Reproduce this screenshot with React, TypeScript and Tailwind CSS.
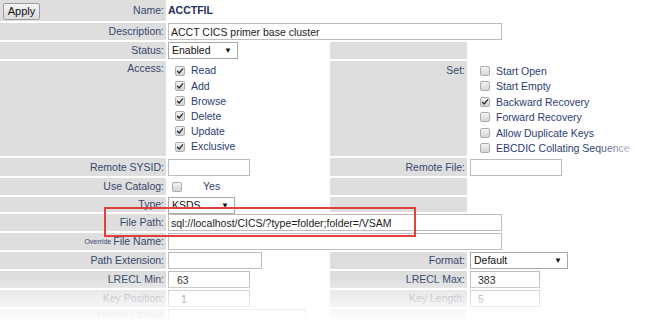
import React from "react";

const font = { fontFamily: '"Liberation Sans", Arial, sans-serif' };

const Check = ({ checked = false }: { checked?: boolean }) => (
    <span className="inline-flex items-center justify-center w-[10px] h-[10px] rounded-[2px] border border-[#acacac] bg-gradient-to-b from-[#f2f2f2] to-[#d6d6d6] shrink-0">
        {checked && (
            <svg width="8" height="8" viewBox="0 0 8 8">
                <path d="M1.5 4.3 L3.2 6 L6.6 1.8" fill="none" stroke="#2a2a2a" strokeWidth="1.3" strokeLinecap="round" strokeLinejoin="round" />
            </svg>
        )}
    </span>
);

const Label = ({ children, top = false, dim = false }: { children: React.ReactNode; top?: boolean; dim?: boolean }) => (
    <div
        className={`bg-[#dedede] flex justify-end pr-[2px] ${top ? "items-start pt-[2px]" : "items-center"} ${dim ? "text-[#8e95a2]" : "text-[#36476c]"}`}
    >
        {children}
    </div>
);

const Gray = () => <div className="bg-[#dedede]" />;
const Empty = () => <div />;

const TextBox = ({ w, value = "", pad = "pl-[2px]", color = "text-[#1c1c1c]" }: { w: string; value?: string; pad?: string; color?: string }) => (
    <input
        readOnly
        defaultValue={value}
        className={`${w} h-[17px] border border-[#bdbdbd] bg-white ${pad} ${color} text-[10.5px] outline-none`}
    />
);

const Select = ({ w, value }: { w: string; value: string }) => (
    <div className={`${w} h-[17px] border border-[#a9a9a9] bg-white flex items-center justify-between pl-[3px] pr-[5px] text-[#111]`}>
        <span>{value}</span>
        <span className="text-[8px] leading-none">▼</span>
    </div>
);

const access = [
    ["Read", true],
    ["Add", true],
    ["Browse", true],
    ["Delete", true],
    ["Update", true],
    ["Exclusive", true],
] as const;

const sets = [
    ["Start Open", false],
    ["Start Empty", false],
    ["Backward Recovery", true],
    ["Forward Recovery", false],
    ["Allow Duplicate Keys", false],
    ["EBCDIC Collating Sequence", false],
] as const;

export default function App() {
    return (
        <div className="relative w-[647px] h-[320px] overflow-hidden bg-white text-[10.5px] leading-none" style={font}>
            <div className="grid grid-cols-[166px_164px_137px_1fr] grid-rows-[21px_17px_17px_95px_18px_17px_15px_17px_17px_17px_17px_17px_11px] gap-y-[2px]">
                {/* Name */}
                <div className="bg-[#dedede] flex items-center justify-between pl-[3px] pr-[2px] text-[#36476c]">
                    <button className="w-[37px] h-[17px] mt-[1px] rounded-[2px] border border-[#9c9c9c] bg-gradient-to-b from-[#f4f4f4] to-[#dcdcdc] text-[11px] text-[#111]">
                        Apply
                    </button>
                    <span>Name:</span>
                </div>
                <div className="flex items-center pl-[2px] font-bold text-[#1d3160]">ACCTFIL</div>
                <Empty />
                <Empty />

                {/* Description */}
                <Label>Description:</Label>
                <div className="col-span-3 pl-[2px]">
                    <TextBox w="w-[334px]" value="ACCT CICS primer base cluster" />
                </div>

                {/* Status */}
                <Label>Status:</Label>
                <div className="pl-[2px]">
                    <Select w="w-[70px]" value="Enabled" />
                </div>
                <Gray />
                <Empty />

                {/* Access / Set */}
                <Label top>Access:</Label>
                <div className="pl-[9px] pt-[2px] flex flex-col text-[#2b3d72]">
                    {access.map(([name, on]) => (
                        <div key={name} className="h-[15.2px] flex items-center gap-[6px]">
                            <Check checked={on} />
                            <span>{name}</span>
                        </div>
                    ))}
                </div>
                <Label top>
                    <span className="pt-[2px]">Set:</span>
                </Label>
                <div className="pl-[13px] pt-[2px] flex flex-col text-[#2b3d72] whitespace-nowrap">
                    {sets.map(([name, on]) => (
                        <div key={name} className="h-[15.6px] flex items-center gap-[6px]">
                            <Check checked={on} />
                            <span>{name}</span>
                        </div>
                    ))}
                </div>

                {/* Remote */}
                <Label>Remote SYSID:</Label>
                <div className="pl-[2px] flex items-end">
                    <TextBox w="w-[82px]" />
                </div>
                <Label>Remote File:</Label>
                <div className="pl-[3px] flex items-end">
                    <TextBox w="w-[92px]" />
                </div>

                {/* Use Catalog */}
                <Label>Use Catalog:</Label>
                <div className="pl-[6px] flex items-center text-[#2b3d72]">
                    <Check />
                    <span className="ml-[21px]">Yes</span>
                </div>
                <Gray />
                <Empty />

                {/* Type */}
                <Label>Type:</Label>
                <div className="pl-[2px]">
                    <Select w="w-[67px]" value="KSDS" />
                </div>
                <Gray />
                <Empty />

                {/* File Path */}
                <Label>File Path:</Label>
                <div className="col-span-3 pl-[2px]">
                    <TextBox w="w-[334px]" value="sql://localhost/CICS/?type=folder;folder=/VSAM" />
                </div>

                {/* Override File Name */}
                <Label>
                    <span className="text-[7px] mr-[2px] self-center">Override</span>
                    <span>File Name:</span>
                </Label>
                <div className="col-span-3 pl-[2px]">
                    <TextBox w="w-[334px]" />
                </div>

                {/* Path Extension / Format */}
                <Label>Path Extension:</Label>
                <div className="pl-[2px]">
                    <TextBox w="w-[94px]" />
                </div>
                <Label>Format:</Label>
                <div className="pl-[3px]">
                    <Select w="w-[98px]" value="Default" />
                </div>

                {/* LRECL */}
                <Label>LRECL Min:</Label>
                <div className="pl-[2px]">
                    <TextBox w="w-[82px]" value="63" pad="pl-[8px]" />
                </div>
                <Label>LRECL Max:</Label>
                <div className="pl-[3px]">
                    <TextBox w="w-[70px]" value="383" pad="pl-[7px]" />
                </div>

                {/* Key */}
                <Label dim>Key Position:</Label>
                <div className="pl-[2px]">
                    <TextBox w="w-[82px]" value="1" pad="pl-[12px]" color="text-[#6e4646]" />
                </div>
                <Label dim>Key Length:</Label>
                <div className="pl-[3px]">
                    <TextBox w="w-[70px]" value="5" pad="pl-[7px]" color="text-[#777]" />
                </div>

                {/* Fileshare, cut by the bottom edge */}
                <div className="bg-[#dedede] flex justify-end items-start pr-[2px] pt-[2px] text-[9px] text-[#8e95a2]">
                    Fileshare Group:
                </div>
                <div className="pl-[2px]">
                    <div className="w-[138px] h-[11px] border border-b-0 border-[#bdbdbd]" />
                </div>
                <Gray />
                <Empty />
            </div>

            {/* highlight */}
            <div className="absolute left-[104px] top-[207px] w-[312px] h-[30px] border-2 border-[#e2403d] pointer-events-none" />

            {/* edge fades */}
            <div className="absolute left-0 right-0 bottom-0 h-[42px] bg-gradient-to-b from-white/0 via-white/55 to-white/95 pointer-events-none" />
            <div className="absolute top-0 bottom-0 right-0 w-[52px] bg-gradient-to-r from-white/0 to-white pointer-events-none" />
        </div>
    );
}
